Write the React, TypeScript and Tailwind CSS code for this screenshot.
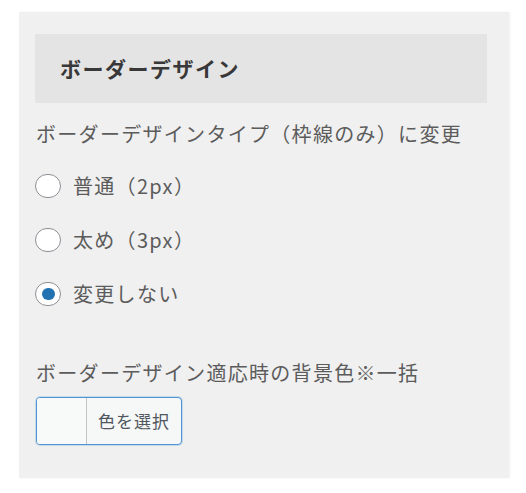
import React, { useState } from 'react';

const options = [
  { key: 'normal', label: '普通（2px）' },
  { key: 'thick', label: '太め（3px）' },
  { key: 'none', label: '変更しない' },
];

const App: React.FC = () => {
  const [selected, setSelected] = useState('none');

  return (
    <div
      className="min-h-[493px] w-[526px] bg-white pt-[12px] pl-[19px]"
      style={{ fontFamily: '"Noto Sans CJK JP", "Noto Sans", sans-serif' }}
    >
      <div className="w-[490px] h-[466px] bg-[#f0f0f0] pt-[22px] pl-[16px] pr-[22px] shadow-[1px_0_2px_rgba(0,0,0,0.06)]">
        {/* Section heading */}
        <div className="h-[69px] bg-[#e4e4e4] flex items-center pl-[25px]">
          <h2 className="text-[21px] font-bold text-[#383838] tracking-[1.5px] leading-none">ボーダーデザイン</h2>
        </div>

        <p className="mt-[17px] text-[20px] leading-[28px] tracking-[1.3px] text-[#5c5c5c] pl-[1px]">
          ボーダーデザインタイプ（枠線のみ）に変更
        </p>

        <div className="mt-[11px] flex flex-col">
          {options.map((opt) => (
            <label key={opt.key} className="h-[54px] flex items-center gap-[12px] cursor-pointer">
              <span
                onClick={() => setSelected(opt.key)}
                className="w-[26px] h-[24px] rounded-full border border-[#8c8f94] bg-white flex items-center justify-center"
              >
                {selected === opt.key && <span className="w-[13px] h-[12px] rounded-full bg-[#2271b1]" />}
              </span>
              <span className="text-[20px] tracking-[1.3px] text-[#5c5c5c] leading-none">{opt.label}</span>
            </label>
          ))}
        </div>

        <p className="mt-[38px] text-[20px] leading-[28px] tracking-[1.3px] text-[#5c5c5c] pl-[1px]">
          ボーダーデザイン適応時の背景色※一括
        </p>

        <button className="mt-[10px] ml-[1px] w-[146px] h-[48px] flex items-stretch rounded-[4px] border border-[#4f94d4] bg-[#f6f7f7] overflow-hidden shadow-[0_0_0_1px_rgba(79,148,212,0.25)]">
          <span className="w-[50px] bg-[#f8f9f9] border-r border-[#c3c4c7]" />
          <span className="flex-1 flex items-center justify-center text-[17px] tracking-[1px] text-[#50575e]">
            色を選択
          </span>
        </button>
      </div>
    </div>
  );
};

export default App;
